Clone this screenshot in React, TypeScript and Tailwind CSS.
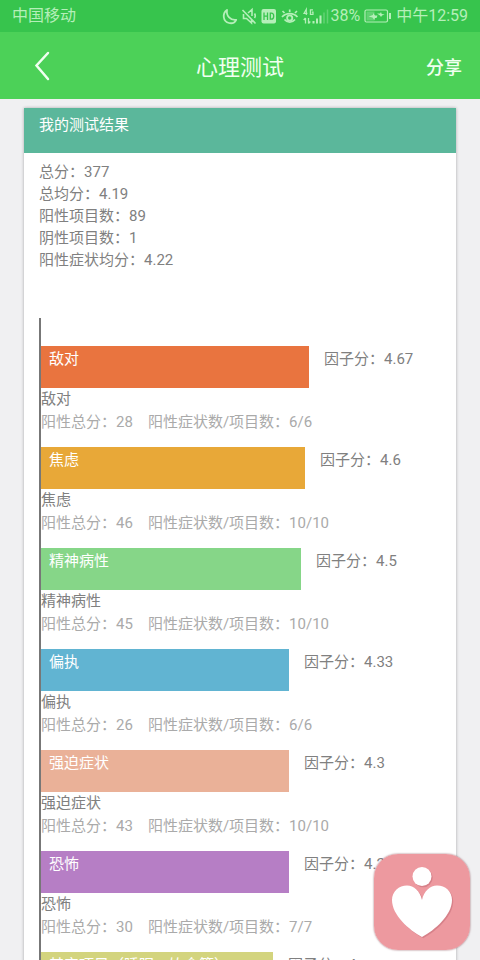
import React from 'react';

interface Factor {
  name: string;
  score: string;
  total: number;
  items: string;
  width: number;
  color: string;
}

const summary = [
  { label: '总分', value: '377' },
  { label: '总均分', value: '4.19' },
  { label: '阳性项目数', value: '89' },
  { label: '阴性项目数', value: '1' },
  { label: '阳性症状均分', value: '4.22' },
];

const factors: Factor[] = [
  { name: '敌对', score: '4.67', total: 28, items: '6/6', width: 67, color: 'bg-[#e9743f]' },
  { name: '焦虑', score: '4.6', total: 46, items: '10/10', width: 66, color: 'bg-[#e8a838]' },
  { name: '精神病性', score: '4.5', total: 45, items: '10/10', width: 65, color: 'bg-[#86d688]' },
  { name: '偏执', score: '4.33', total: 26, items: '6/6', width: 62, color: 'bg-[#61b4d2]' },
  { name: '强迫症状', score: '4.3', total: 43, items: '10/10', width: 62, color: 'bg-[#eab198]' },
  { name: '恐怖', score: '4.29', total: 30, items: '7/7', width: 62, color: 'bg-[#b67ec5]' },
  { name: '其它项目（睡眠、饮食等）', score: '4', total: 28, items: '7/7', width: 58, color: 'bg-[#d3d47e]' },
];

const StatusIcons: React.FC = () => (
  <svg width="108" height="20" viewBox="0 0 108 20" fill="none" stroke="currentColor" strokeWidth="1.6" aria-hidden="true">
    {/* Moon */}
    <path d="M5 4C0 7.500.8 15.500 7 17c3.200.7 6-.6 7.200-3.200C8.500 14.500 4 10 5 4Z" strokeWidth="1.800" strokeLinejoin="round" />
    {/* Muted bell */}
    <path d="M20.500 4 33.500 17.500M21.500 8v4.500h3l5 4.500V13.500M26 7l4-3.500V10M32.500 7.500c1 1.500 1 3 0 4.500" />
    {/* HD */}
    <rect x="39.500" y="3" width="14.500" height="14.500" rx="2" fill="currentColor" stroke="none" />
    <path d="M42 6.500v7.500M45.500 6.500v7.500M42 10.200h3.500M48.300 7.200v6h1c1.600 0 2.400-1 2.400-3s-.8-3-2.400-3Z" stroke="#37c44d" strokeWidth="1.300" />
    {/* Eye */}
    <path d="M60 11c4-4.500 11.500-4.500 15.500 0M62.500 13.500c3 3.600 7.500 3.600 10.500 0M62.500 7l-2-2M67.700 6V3.500M73 7l2-2" strokeWidth="1.700" />
    <circle cx="67.700" cy="12" r="2.600" strokeWidth="1.800" />
    {/* Signal */}
    <path d="M84.300 9V3.200L82 7.300h3.400M91 3.800h-2.600v4.600H91V6.200h-1.300" strokeWidth="1.200" />
    <path d="M83.500 12v5.500M83.500 12l-1.800 2M86.500 17.500V12M86.500 17.500l1.800-2" strokeWidth="1.300" />
    <path d="M91.500 15v2.500M95 12.500v5M98.500 9.500v8" strokeWidth="2" />
    <path d="M102 6.500v11M105.500 3.500v14" strokeWidth="1.500" opacity=".35" />
  </svg>
);

const BatteryIcon: React.FC = () => (
  <svg width="28" height="14" viewBox="0 0 28 14" fill="none" stroke="currentColor" aria-hidden="true">
    <rect x="1" y="1" width="22.500" height="12" rx="1.500" strokeWidth="1.200" />
    <rect x="2.500" y="2.500" width="8" height="9" fill="currentColor" stroke="none" opacity=".35" />
    <path d="M4.500 7.500 9 6V4l2 2.500h2.500L12.500 9H11l-.7 2L8.500 8.500ZM13 4.500h3l1-1.500.7 2 3 .5-2.700 1-1 1.500L16 6.500Z" fill="currentColor" stroke="none" />
    <path d="M26 4v6" strokeWidth="2" />
  </svg>
);

const StatusBar: React.FC = () => (
  <div className="flex h-8 shrink-0 items-center justify-between bg-[#37c44d] px-3 text-base text-[#b5efb9]">
    <span>中国移动</span>
    <div className="flex items-center">
      <StatusIcons />
      <span>38%</span>
      <span className="mx-1">
        <BatteryIcon />
      </span>
      <span>中午12:59</span>
    </div>
  </div>
);

const NavBar: React.FC = () => (
  <header className="grid h-[67px] shrink-0 grid-cols-[1fr_auto_1fr] items-center bg-[#4cd158] text-[#f0fff0]">
    <button type="button" aria-label="返回" className="ml-8 w-5 justify-self-start">
      <svg width="20" height="32" viewBox="0 0 20 32" fill="none" stroke="currentColor" strokeWidth="2.500" strokeLinecap="round">
        <path d="M16 3 4.500 15.500 16 29" />
      </svg>
    </button>
    <h1 className="pt-1 text-[22px]">心理测试</h1>
    <button type="button" className="mr-[18px] justify-self-end pt-1 text-lg font-medium">分享</button>
  </header>
);

const FactorRow: React.FC<{ factor: Factor }> = ({ factor }) => (
  <li className="mb-[14px]">
    <div className="flex h-[42px] leading-[27px]">
      <div className={`${factor.color} shrink-0 pl-2 text-white`} style={{ width: `${factor.width}%` }}>
        {factor.name}
      </div>
      <span className="ml-[15px] whitespace-nowrap">因子分：{factor.score}</span>
    </div>
    <p className="leading-[23px]">{factor.name}</p>
    <p className="flex gap-[15px] leading-[22px] text-[#aaaaaa]">
      <span>阳性总分：{factor.total}</span>
      <span>阳性症状数/项目数：{factor.items}</span>
    </p>
  </li>
);

const App: React.FC = () => {
  return (
    <div className="relative flex h-screen flex-col overflow-hidden bg-[#f0f0f2] font-['Roboto','Noto_Sans_CJK_SC',sans-serif]">
      <StatusBar />
      <NavBar />

      <main className="min-h-0 flex-1 overflow-y-auto px-6 pt-[9px] [scrollbar-width:none]">
        <section className="bg-white text-[15px] text-[#808080] shadow-[0_0_3px_rgba(0,0,0,0.3)]">
          <h2 className="h-[45px] bg-[#5bb79b] px-[15px] pt-[6px] leading-[22px] text-white">我的测试结果</h2>

          <div className="px-[15px] pt-2">
            {summary.map((item) => (
              <p key={item.label} className="leading-[22px]">
                {item.label}：{item.value}
              </p>
            ))}

            {/* Factor chart */}
            <ul className="mt-[47px] border-l-2 border-[#777777] pt-7">
              {factors.map((factor) => (
                <FactorRow key={factor.name} factor={factor} />
              ))}
            </ul>
          </div>
        </section>
      </main>

      {/* Floating shortcut */}
      <button type="button" aria-label="心理咨询" className="absolute bottom-[10px] right-[10px] rounded-3xl shadow-[0_0_2px_rgba(120,50,60,0.8)]">
        <svg width="96" height="96" viewBox="0 0 96 96">
          <rect width="96" height="96" rx="24" fill="#ed999f" />
          <g fill="#c9727c" opacity=".6" transform="translate(1.200 1.200)">
            <circle cx="48" cy="22.500" r="9.500" />
            <path d="M48 46C46 37 40 31.500 33 31.500c-8 0-15 6-15 14.500C18 61 35 76 48 83c13-7 30-22 30-37 0-8.500-6.500-14.500-15-14.500C56 31.500 50 37 48 46Z" />
          </g>
          <g fill="#fff">
            <circle cx="48" cy="22.500" r="9.500" />
            <path d="M48 46C46 37 40 31.500 33 31.500c-8 0-15 6-15 14.500C18 61 35 76 48 83c13-7 30-22 30-37 0-8.500-6.500-14.500-15-14.500C56 31.500 50 37 48 46Z" />
          </g>
        </svg>
      </button>
    </div>
  );
};

export default App;
